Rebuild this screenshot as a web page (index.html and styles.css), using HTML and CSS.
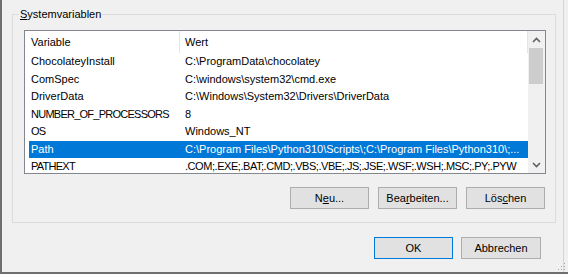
FILE: index.html
```html
<!DOCTYPE html>
<html lang="de">
<head>
    <meta charset="UTF-8">
    <meta name="viewport" content="width=device-width, initial-scale=1.0">
    <title>Umgebungsvariablen</title>
    <link rel="stylesheet" href="styles.css">
</head>
<body>
    <div class="window">
        <div class="pane">
            <fieldset class="group">
                <legend><u>S</u>ystemvariablen</legend>
                <div class="list">
                    <div class="rows">
                        <div class="header">
                            <div class="col-name">Variable</div>
                            <div class="col-value">Wert</div>
                        </div>
                        <div class="row"><div class="col-name">ChocolateyInstall</div><div class="col-value">C:\ProgramData\chocolatey</div></div>
                        <div class="row"><div class="col-name">ComSpec</div><div class="col-value">C:\windows\system32\cmd.exe</div></div>
                        <div class="row"><div class="col-name">DriverData</div><div class="col-value">C:\Windows\System32\Drivers\DriverData</div></div>
                        <div class="row"><div class="col-name caps">NUMBER_OF_PROCESSORS</div><div class="col-value">8</div></div>
                        <div class="row"><div class="col-name caps">OS</div><div class="col-value">Windows_NT</div></div>
                        <div class="row selected"><div class="col-name">Path</div><div class="col-value">C:\Program Files\Python310\Scripts\;C:\Program Files\Python310\;...</div></div>
                        <div class="row"><div class="col-name caps">PATHEXT</div><div class="col-value ext">.COM;.EXE;.BAT;.CMD;.VBS;.VBE;.JS;.JSE;.WSF;.WSH;.MSC;.PY;.PYW</div></div>
                    </div>
                    <div class="scrollbar">
                        <div class="arrow">
                            <svg width="9" height="6" viewBox="0 0 9 6"><polyline points="1,5 4.5,1.5 8,5" fill="none" stroke="#606060" stroke-width="1.6"/></svg>
                        </div>
                        <div class="thumb"></div>
                        <div class="track"></div>
                        <div class="arrow">
                            <svg width="9" height="6" viewBox="0 0 9 6"><polyline points="1,1 4.5,4.5 8,1" fill="none" stroke="#606060" stroke-width="1.6"/></svg>
                        </div>
                    </div>
                </div>
                <div class="group-buttons">
                    <button>N<u>e</u>u...</button>
                    <button>Bea<u>r</u>beiten...</button>
                    <button>Lös<u>c</u>hen</button>
                </div>
            </fieldset>
            <div class="dialog-buttons">
                <button class="default">OK</button>
                <button>Abbrechen</button>
            </div>
        </div>
        <svg class="grip" width="8" height="8" viewBox="0 0 8 8">
            <rect x="6" y="0" width="1" height="1" fill="#a0a0a0"/>
            <rect x="3" y="3" width="1" height="1" fill="#a0a0a0"/>
            <rect x="6" y="3" width="1" height="1" fill="#a0a0a0"/>
            <rect x="0" y="6" width="1" height="1" fill="#a0a0a0"/>
            <rect x="3" y="6" width="1" height="1" fill="#a0a0a0"/>
            <rect x="6" y="6" width="1" height="1" fill="#a0a0a0"/>
        </svg>
    </div>
</body>
</html>
```

FILE: styles.css
```css
* {
    box-sizing: border-box;
}
body {
    margin: 0;
    background: #f0f0f0;
    font-family: "Liberation Sans", Arial, sans-serif;
    font-size: 11px;
    color: #000;
}
.window {
    position: relative;
    width: 568px;
    height: 274px;
    border-left: 2px solid #6f6f6f;
    border-bottom: 2px solid #6f6f6f;
    overflow: hidden;
}
.pane {
    width: 562px;
    height: 272px;
    border-right: 1px solid #d6d6d6;
    padding-top: 6px;
}
.group {
    margin: 0 0 0 10px;
    width: 544px;
    height: 217px;
    padding: 0;
    border: 1px solid #dcdcdc;
    min-width: 0;
}
.group legend {
    margin-left: 6px;
    padding: 0 1px;
    line-height: 16px;
}
.list {
    display: flex;
    margin: 8px 0 0 11px;
    width: 522px;
    height: 144px;
    border: 1px solid #828790;
    background: #fff;
}
.rows {
    flex: 1;
    overflow: hidden;
}
.header {
    display: flex;
    height: 22px;
    align-items: center;
}
.header .col-name {
    width: 155px;
    padding-left: 6px;
    height: 22px;
    line-height: 22px;
    border-right: 1px solid #e5e5e5;
}
.header .col-value {
    flex: 1;
    padding-left: 5px;
    height: 22px;
    line-height: 22px;
    border-right: 1px solid #e5e5e5;
}
.row {
    display: flex;
    margin-left: 4px;
    height: 17.5px;
    line-height: 17.5px;
    white-space: nowrap;
}
.row .col-name {
    flex: 0 0 151px;
    padding-left: 2px;
}
.row .col-value {
    flex: 1;
    padding-left: 5px;
}
.caps {
    letter-spacing: -0.75px;
}
.ext {
    letter-spacing: -0.45px;
}
.row.selected {
    background: #0078d7;
    color: #fff;
}
.scrollbar {
    width: 17px;
    display: flex;
    flex-direction: column;
    background: #f0f0f0;
}
.arrow {
    height: 17px;
    display: flex;
    align-items: center;
    justify-content: center;
}
.thumb {
    height: 36px;
    margin: 0 2px 0 1px;
    background: #cdcdcd;
}
.track {
    flex: 1;
}
.group-buttons {
    display: flex;
    justify-content: flex-end;
    gap: 9px;
    margin-top: 13px;
    padding-right: 10px;
}
button {
    width: 79px;
    height: 22px;
    padding: 0;
    font-family: inherit;
    font-size: 11px;
    color: #000;
    background: #e1e1e1;
    border: 1px solid #adadad;
    border-radius: 0;
}
button.default {
    border-color: #0078d7;
}
.dialog-buttons {
    display: flex;
    justify-content: flex-end;
    gap: 8px;
    margin-top: 14px;
    padding-right: 22px;
}
.dialog-buttons button:last-child {
    width: 80px;
}
.grip {
    position: absolute;
    right: 2px;
    bottom: 1px;
}
```
